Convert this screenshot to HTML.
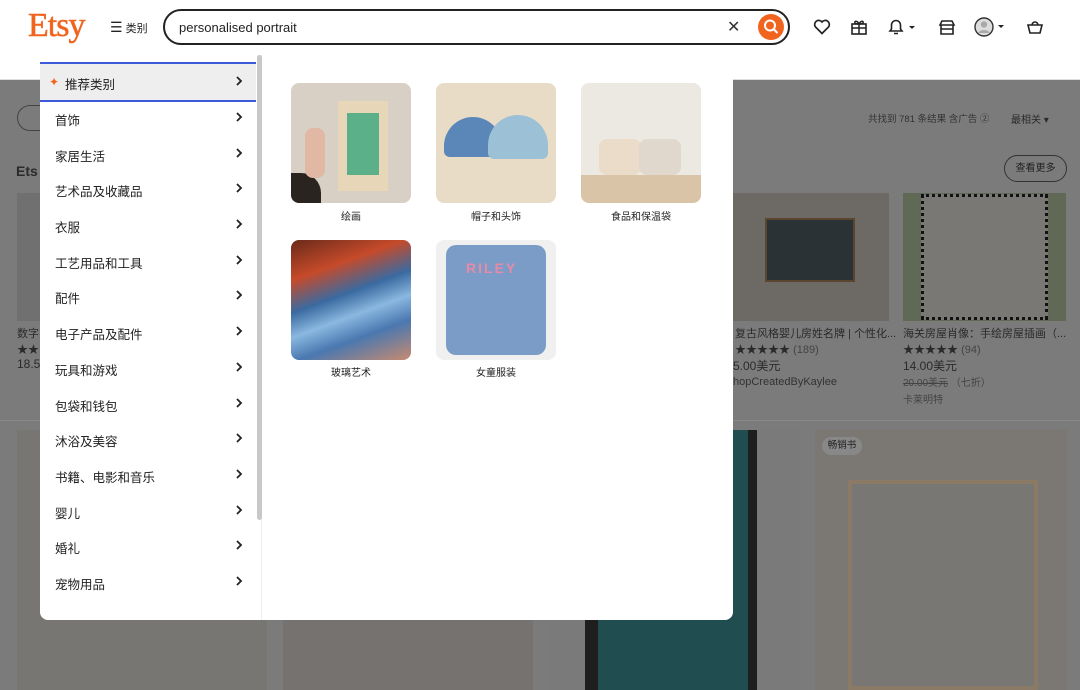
<!DOCTYPE html>
<html><head><meta charset="utf-8"><style>
*{margin:0;padding:0;box-sizing:border-box}
body{width:1080px;height:687px;overflow:hidden;position:relative;background:#7b7b7b;font-family:"Liberation Sans","Noto Sans CJK SC",sans-serif;color:#222}
.hdr{position:absolute;left:0;top:0;width:1080px;height:80px;background:#fff;border-bottom:1px solid #ddd}
.logo{position:absolute;left:28px;top:7px;font-family:"Liberation Serif",serif;font-size:34px;color:#f1641e;letter-spacing:-1px;-webkit-text-stroke:.5px #f1641e}
.cat{position:absolute;left:110px;top:19px;font-size:11px;color:#222}
.search{position:absolute;left:163px;top:9px;width:627px;height:36px;border:2px solid #222;border-radius:20px}
.search span{position:absolute;left:14px;top:9px;font-size:13px;color:#222}
.sbtn{position:absolute;right:4px;top:3px;width:26px;height:26px;border-radius:50%;background:#f1641e}
.abs{position:absolute}
.g{position:absolute;background:#6e6e6e}
.t{position:absolute;font-size:11px;color:#2a2a2a}
.dd{position:absolute;left:40px;top:55px;width:693px;height:565px;background:#fff;border-radius:8px;overflow:hidden}
.left{position:absolute;left:0;top:0;width:222px;height:565px;border-right:1px solid #eee}
.sb{position:absolute;left:217px;top:0;width:5px;height:465px;background:#c8c8c8;border-radius:3px}
.rec{position:absolute;left:0;top:7px;width:216px;height:40px;background:#eeeeee;border-top:2px solid #3b5bdb;border-bottom:2px solid #3b5bdb}
.it{position:absolute;left:15px;font-size:12.5px;color:#222}
.ch{position:absolute;left:195px;width:8px;height:10px}
.th{position:absolute;width:120px;height:120px;border-radius:8px;overflow:hidden}
.lb{position:absolute;width:120px;text-align:center;font-size:10px;color:#222}
</style></head><body>
<div class="abs" style="left:17px;top:105px;width:50px;height:26px;border:1px solid #444;border-radius:14px"></div>
<div class="t" style="left:868px;top:111px;font-size:9.5px;color:#333">共找到 781 条结果 含广告 ②</div>
<div class="t" style="left:1011px;top:111px;font-size:10px">最相关 ▾</div>
<div class="t" style="left:16px;top:163px;font-size:14px;font-weight:bold">Ets</div>
<div class="abs" style="left:1004px;top:155px;width:63px;height:27px;border:1px solid #333;border-radius:14px;font-size:10px;text-align:center;line-height:25px;color:#222">查看更多</div>
<div class="g" style="left:17px;top:193px;width:30px;height:128px;background:#707070"></div>
<div class="g" style="left:733px;top:193px;width:156px;height:128px;background:#6d6a66"></div>
<div class="g" style="left:765px;top:218px;width:90px;height:64px;background:#2b3236;border:2px solid #5a4630"></div>
<div class="g" style="left:903px;top:193px;width:163px;height:128px;background:#5f6956"></div>
<div class="g" style="left:921px;top:194px;width:127px;height:126px;background:#7a7875;border:3px dotted #111"></div>
<div class="t" style="left:17px;top:325px">数字</div>
<div class="t" style="left:17px;top:341px">★★</div>
<div class="t" style="left:17px;top:357px;font-size:12px">18.5</div>
<div class="t" style="left:735px;top:325px">复古风格婴儿房姓名牌 | 个性化...</div>
<div class="t" style="left:735px;top:341px">★★★★★ <span style="color:#444">(189)</span></div>
<div class="t" style="left:733px;top:357px;font-size:12px">5.00美元</div>
<div class="t" style="left:733px;top:376px;color:#333">hopCreatedByKaylee</div>
<div class="t" style="left:903px;top:325px">海关房屋肖像：手绘房屋插画（...</div>
<div class="t" style="left:903px;top:341px">★★★★★ <span style="color:#444">(94)</span></div>
<div class="t" style="left:903px;top:357px;font-size:12px">14.00美元</div>
<div class="t" style="left:903px;top:374px;color:#444;font-size:10px"><s>20.00美元</s> （七折）</div>
<div class="t" style="left:903px;top:391px;color:#444;font-size:10px">卡莱明特</div>
<div class="abs" style="left:0;top:420px;width:1080px;height:1px;background:#888"></div>
<div class="g" style="left:17px;top:430px;width:250px;height:260px;background:#787673"></div>
<div class="g" style="left:283px;top:430px;width:250px;height:260px;background:#75726f"></div>
<div class="g" style="left:550px;top:430px;width:250px;height:260px;background:#7a7a7a"></div>
<div class="g" style="left:585px;top:430px;width:172px;height:260px;background:#1e1e1e"></div>
<div class="g" style="left:598px;top:430px;width:150px;height:260px;background:#1f4d50"></div>
<div class="g" style="left:815px;top:430px;width:252px;height:260px;background:#7b7874"></div>
<div class="g" style="left:848px;top:480px;width:190px;height:210px;background:#797774;border:4px solid #8a7a66"></div>
<div class="abs" style="left:822px;top:437px;width:40px;height:18px;background:#888;border-radius:9px;font-size:9.5px;text-align:center;line-height:18px">畅销书</div>
<div class="hdr">
<div class="logo">Etsy</div>
<div class="cat"><span style="font-size:14px">☰</span> 类别</div>
<div class="search"><span>personalised portrait</span>
<span style="left:562px;top:6px;font-size:16px;color:#333">✕</span>
<div class="sbtn"><svg width="26" height="26" viewBox="0 0 26 26"><circle cx="12" cy="11.5" r="5" fill="none" stroke="#fff" stroke-width="2"/><path d="M15.5 15l4 4" stroke="#fff" stroke-width="2"/></svg></div></div>
<svg class="abs" style="left:812px;top:17px" width="20" height="20" viewBox="0 0 20 20"><path d="M10 16.5L3.5 10A3.7 3.7 0 0 1 10 5a3.7 3.7 0 0 1 6.5 5z" fill="none" stroke="#222" stroke-width="1.7"/></svg>
<svg class="abs" style="left:849px;top:17px" width="20" height="20" viewBox="0 0 20 20"><rect x="3" y="7" width="14" height="10" fill="none" stroke="#222" stroke-width="1.6"/><path d="M3 11h14M10 7v10M10 7c-2-4-5-3-4-1 1 1 4 1 4 1 0 0 3 0 4-1 1-2-2-3-4 1" fill="none" stroke="#222" stroke-width="1.5"/></svg>
<svg class="abs" style="left:886px;top:17px" width="30" height="20" viewBox="0 0 30 20"><path d="M4 14h12l-1.5-2V8a4.5 4.5 0 0 0-9 0v4zM8 16.5h4" fill="none" stroke="#222" stroke-width="1.6"/><path d="M23 9h6l-3 3z" fill="#222"/></svg>
<svg class="abs" style="left:937px;top:17px" width="20" height="20" viewBox="0 0 20 20"><path d="M3 8l2-4h10l2 4zM4 8v9h12V8M4 12h12" fill="none" stroke="#222" stroke-width="1.6"/></svg>
<svg class="abs" style="left:973px;top:16px" width="34" height="22" viewBox="0 0 34 22"><circle cx="11" cy="11" r="9" fill="#ddd" stroke="#333" stroke-width="1.4"/><circle cx="11" cy="8.5" r="3.2" fill="#aaa"/><path d="M5 17c2-4 10-4 12 0" fill="#aaa"/><path d="M25 9h6l-3 3z" fill="#222"/></svg>
<svg class="abs" style="left:1025px;top:17px" width="20" height="20" viewBox="0 0 20 20"><path d="M3 8h14l-2 8H5zM7 8a3 3 0 0 1 6 0" fill="none" stroke="#222" stroke-width="1.6"/></svg>
</div>
<div class="dd">
<div class="left">
<div class="rec"></div>
<div class="abs" style="left:9px;top:20px;color:#f1641e;font-size:12px">✦</div>
<div class="it" style="left:25px;top:19px">推荐类别</div><svg class="ch" style="top:21px" viewBox="0 0 8 10"><path d="M2 1l4 4-4 4" fill="none" stroke="#222" stroke-width="1.8"/></svg>
<div class="it" style="top:55px">首饰</div><svg class="ch" style="top:57px" viewBox="0 0 8 10"><path d="M2 1l4 4-4 4" fill="none" stroke="#222" stroke-width="1.8"/></svg>
<div class="it" style="top:91px">家居生活</div><svg class="ch" style="top:93px" viewBox="0 0 8 10"><path d="M2 1l4 4-4 4" fill="none" stroke="#222" stroke-width="1.8"/></svg>
<div class="it" style="top:126px">艺术品及收藏品</div><svg class="ch" style="top:128px" viewBox="0 0 8 10"><path d="M2 1l4 4-4 4" fill="none" stroke="#222" stroke-width="1.8"/></svg>
<div class="it" style="top:162px">衣服</div><svg class="ch" style="top:164px" viewBox="0 0 8 10"><path d="M2 1l4 4-4 4" fill="none" stroke="#222" stroke-width="1.8"/></svg>
<div class="it" style="top:198px">工艺用品和工具</div><svg class="ch" style="top:200px" viewBox="0 0 8 10"><path d="M2 1l4 4-4 4" fill="none" stroke="#222" stroke-width="1.8"/></svg>
<div class="it" style="top:233px">配件</div><svg class="ch" style="top:235px" viewBox="0 0 8 10"><path d="M2 1l4 4-4 4" fill="none" stroke="#222" stroke-width="1.8"/></svg>
<div class="it" style="top:269px">电子产品及配件</div><svg class="ch" style="top:271px" viewBox="0 0 8 10"><path d="M2 1l4 4-4 4" fill="none" stroke="#222" stroke-width="1.8"/></svg>
<div class="it" style="top:305px">玩具和游戏</div><svg class="ch" style="top:307px" viewBox="0 0 8 10"><path d="M2 1l4 4-4 4" fill="none" stroke="#222" stroke-width="1.8"/></svg>
<div class="it" style="top:341px">包袋和钱包</div><svg class="ch" style="top:343px" viewBox="0 0 8 10"><path d="M2 1l4 4-4 4" fill="none" stroke="#222" stroke-width="1.8"/></svg>
<div class="it" style="top:376px">沐浴及美容</div><svg class="ch" style="top:378px" viewBox="0 0 8 10"><path d="M2 1l4 4-4 4" fill="none" stroke="#222" stroke-width="1.8"/></svg>
<div class="it" style="top:412px">书籍、电影和音乐</div><svg class="ch" style="top:414px" viewBox="0 0 8 10"><path d="M2 1l4 4-4 4" fill="none" stroke="#222" stroke-width="1.8"/></svg>
<div class="it" style="top:448px">婴儿</div><svg class="ch" style="top:450px" viewBox="0 0 8 10"><path d="M2 1l4 4-4 4" fill="none" stroke="#222" stroke-width="1.8"/></svg>
<div class="it" style="top:483px">婚礼</div><svg class="ch" style="top:485px" viewBox="0 0 8 10"><path d="M2 1l4 4-4 4" fill="none" stroke="#222" stroke-width="1.8"/></svg>
<div class="it" style="top:519px">宠物用品</div><svg class="ch" style="top:521px" viewBox="0 0 8 10"><path d="M2 1l4 4-4 4" fill="none" stroke="#222" stroke-width="1.8"/></svg>
</div>
<div class="sb"></div>
<div class="th" style="left:251px;top:28px;background:#d8d0c4">
<div class="abs" style="left:47px;top:18px;width:50px;height:90px;background:#e8d6b8"></div>
<div class="abs" style="left:56px;top:30px;width:32px;height:62px;background:#5bb08a"></div>
<div class="abs" style="left:0;top:90px;width:30px;height:30px;background:#2a2420;border-radius:0 20px 0 0"></div>
<div class="abs" style="left:14px;top:45px;width:20px;height:50px;background:#e0b8a4;border-radius:8px"></div></div>
<div class="lb" style="left:251px;top:153px">绘画</div>
<div class="th" style="left:396px;top:28px;background:#e8dcc6">
<div class="abs" style="left:8px;top:34px;width:58px;height:40px;background:#5a86b8;border-radius:30px 30px 6px 6px"></div>
<div class="abs" style="left:52px;top:32px;width:60px;height:44px;background:#9cc0d6;border-radius:30px 30px 6px 6px"></div></div>
<div class="lb" style="left:396px;top:153px">帽子和头饰</div>
<div class="th" style="left:541px;top:28px;background:#ece8e2">
<div class="abs" style="left:0;top:92px;width:120px;height:28px;background:#d9c4a8"></div>
<div class="abs" style="left:18px;top:56px;width:42px;height:36px;background:#eadcc8;border-radius:8px"></div>
<div class="abs" style="left:58px;top:56px;width:42px;height:36px;background:#e0d8cc;border-radius:8px"></div></div>
<div class="lb" style="left:541px;top:153px">食品和保温袋</div>
<div class="th" style="left:251px;top:185px;background:linear-gradient(160deg,#6a2a1a,#c64a2a 25%,#3a6aa0 45%,#8ab8e0 60%,#4a78b0 75%,#c88a70)"></div>
<div class="lb" style="left:251px;top:309px">玻璃艺术</div>
<div class="th" style="left:396px;top:185px;background:#f0f0f0">
<div class="abs" style="left:10px;top:5px;width:100px;height:110px;background:#7a9cc6;border-radius:10px"></div>
<div class="abs" style="left:30px;top:20px;width:60px;height:14px;color:#e88aa8;font-weight:bold;font-size:14px;letter-spacing:2px">RILEY</div></div>
<div class="lb" style="left:396px;top:309px">女童服装</div>
</div>
</body></html>
